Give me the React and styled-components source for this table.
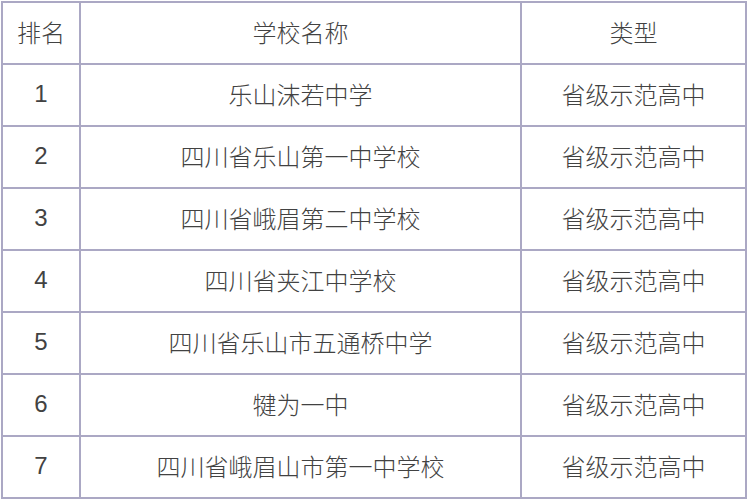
import styled, { createGlobalStyle } from "styled-components";

const GlobalStyle = createGlobalStyle`
  html, body {
    margin: 0;
    padding: 0;
    background: #fff;
  }
  body {
    font-family: "Noto Sans CJK SC", "Noto Sans", sans-serif;
  }
`;

const Wrapper = styled.div`
  padding: 1px;
`;

const Table = styled.table`
  border-collapse: separate;
  border-spacing: 0;
  table-layout: fixed;
  width: 746px;
  border-top: 2px solid #aba8c4;
  border-left: 2px solid #aba8c4;
`;

const Row = styled.tr`
  height: 62px;
`;

const Cell = styled.td`
  box-sizing: border-box;
  width: ${props => props.$w}px;
  padding: 0 0 2px;
  text-align: center;
  vertical-align: middle;
  border-right: 2px solid #aba8c4;
  border-bottom: 2px solid #aba8c4;
  color: #424242;
  font-size: 24px;
  line-height: 1;
  font-family: ${props => props.$num ? `"Liberation Sans", "Noto Sans CJK SC", sans-serif` : `"Noto Sans CJK SC", sans-serif`};
  font-weight: 300;
`;

const HeadCell = styled(Cell).attrs({ as: "th" })`
  font-weight: 300;
  font-family: "Noto Sans CJK SC", sans-serif;
`;

const schools = [
  ["1", "乐山沫若中学"],
  ["2", "四川省乐山第一中学校"],
  ["3", "四川省峨眉第二中学校"],
  ["4", "四川省夹江中学校"],
  ["5", "四川省乐山市五通桥中学"],
  ["6", "犍为一中"],
  ["7", "四川省峨眉山市第一中学校"],
];

export default function App() {
  return (
    <Wrapper>
      <GlobalStyle />
      <Table>
        <thead>
          <Row>
            <HeadCell $w={78}>排名</HeadCell>
            <HeadCell $w={441}>学校名称</HeadCell>
            <HeadCell $w={225}>类型</HeadCell>
          </Row>
        </thead>
        <tbody>
          {schools.map(([rank, name]) => (
            <Row key={rank}>
              <Cell $w={78} $num>{rank}</Cell>
              <Cell $w={441}>{name}</Cell>
              <Cell $w={225}>省级示范高中</Cell>
            </Row>
          ))}
        </tbody>
      </Table>
    </Wrapper>
  );
}
